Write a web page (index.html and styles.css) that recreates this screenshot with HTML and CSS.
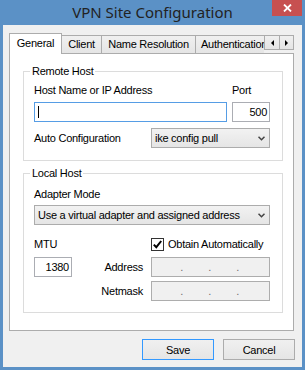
FILE: index.html
```html
<!DOCTYPE html>
<html lang="en">
<head>
<meta charset="UTF-8">
<title>VPN Site Configuration</title>
<link rel="stylesheet" href="styles.css">
</head>
<body>

<div class="window">
  <div class="titlebar">
    <span></span>
    <div class="title">VPN Site Configuration</div>
    <div class="close">
      <svg width="9" height="8" viewBox="0 0 9 8"><path d="M1 0.5 L8 7.5 M8 0.5 L1 7.5" stroke="#fff" stroke-width="1.8"/></svg>
    </div>
  </div>

  <div class="client">
    <div class="tabstrip">
      <div class="tabs">
        <div class="tab tab-active tab-general">General</div>
        <div class="tab tab-client">Client</div>
        <div class="tab tab-names">Name Resolution</div>
        <div class="tab tab-auth">Authentication</div>
      </div>
      <div class="tab-scroll">
        <div class="scroll-btn"><svg width="3" height="6" viewBox="0 0 3 6"><polygon points="3,0 3,6 0,3" fill="#000"/></svg></div>
        <div class="scroll-btn"><svg width="3" height="6" viewBox="0 0 3 6"><polygon points="0,0 0,6 3,3" fill="#000"/></svg></div>
      </div>
    </div>

    <div class="panel">
      <fieldset class="group group-remote">
        <legend>Remote Host</legend>
        <div class="host-row">
          <div class="field field-host">
            <div class="label">Host Name or IP Address</div>
            <div class="edit edit-focus"><span class="caret"></span></div>
          </div>
          <div class="field field-port">
            <div class="label">Port</div>
            <div class="edit edit-num">500</div>
          </div>
        </div>
        <div class="combo-row">
          <div class="label">Auto Configuration</div>
          <div class="combo combo-auto">
            <span>ike config pull</span>
            <svg width="7" height="5" viewBox="0 0 7 5"><path d="M0.5 0.8 L3.5 3.8 L6.5 0.8" fill="none" stroke="#444" stroke-width="1.5"/></svg>
          </div>
        </div>
      </fieldset>

      <fieldset class="group group-local">
        <legend>Local Host</legend>
        <div class="label label-adapter">Adapter Mode</div>
        <div class="combo combo-adapter">
          <span>Use a virtual adapter and assigned address</span>
          <svg width="7" height="5" viewBox="0 0 7 5"><path d="M0.5 0.8 L3.5 3.8 L6.5 0.8" fill="none" stroke="#444" stroke-width="1.5"/></svg>
        </div>
        <div class="addr-grid">
          <div class="label label-top">MTU</div>
          <div class="check">
            <span class="check-box"><svg width="11" height="11" viewBox="0 0 11 11"><path d="M1.8 5.6 L4.3 8.2 L9.2 2" fill="none" stroke="#000" stroke-width="2"/></svg></span>
            <span>Obtain Automatically</span>
          </div>
          <div class="edit edit-num">1380</div>
          <div class="label label-right">Address</div>
          <div class="ip"><span>.</span><span>.</span><span>.</span></div>
          <div class="label label-right label-mask">Netmask</div>
          <div class="ip"><span>.</span><span>.</span><span>.</span></div>
        </div>
      </fieldset>
    </div>

    <div class="buttons">
      <div class="btn btn-default">Save</div>
      <div class="btn">Cancel</div>
    </div>
  </div>
</div>

</body>
</html>
```

FILE: styles.css
```css
body {
  margin: 0;
  width: 305px;
  height: 370px;
  overflow: hidden;
  background-color: #5b91c6;
  font-family: "Liberation Sans", Arial, sans-serif;
  font-size: 11px;
  letter-spacing: -0.25px;
  color: #000;
}
.window {
  height: 370px;
  box-sizing: border-box;
  padding: 0 3px 3px;
  display: flex;
  flex-direction: column;
}

/* title bar */
.titlebar {
  height: 25px;
  margin: 0 -3px;
  display: grid;
  grid-template-columns: 1fr auto 1fr;
}
.title {
  font-family: "Noto Sans", sans-serif;
  font-size: 15px;
  letter-spacing: 0;
  line-height: 24px;
  color: #222;
}
.close {
  justify-self: end;
  width: 30px;
  height: 16px;
  margin-right: 3px;
  background-color: #c75050;
  display: flex;
  align-items: center;
  justify-content: center;
}

.client {
  flex: 1;
  background-color: #f0f0f0;
  padding: 8px 7px 7px 6px;
}

/* tabs */
.tabstrip {
  display: flex;
  height: 21px;
  margin: 0 1px -1px 0;
  position: relative;
  z-index: 1;
}
.tabs {
  display: flex;
  align-items: flex-end;
  width: 255px;
  overflow: hidden;
}
.tab {
  flex-shrink: 0;
  box-sizing: border-box;
  height: 18px;
  margin-bottom: 1px;
  border-top: 1px solid #acacac;
  border-right: 1px solid #acacac;
  background: linear-gradient(#f0f0f0, #e5e5e5);
  text-align: center;
  line-height: 17px;
  white-space: nowrap;
}
.tab-active {
  height: 21px;
  margin-bottom: 0;
  border-left: 1px solid #acacac;
  background: #fff;
  line-height: 18px;
}
.tab-general { width: 53px; }
.tab-client { width: 40px; }
.tab-names { width: 94px; }
.tab-auth {
  width: 90px;
  text-align: left;
  padding-left: 5px;
}
.tab-scroll {
  display: flex;
  width: 30px;
}
.scroll-btn {
  box-sizing: border-box;
  width: 16px;
  height: 15px;
  margin-top: 2px;
  border: 1px solid #acacac;
  background: linear-gradient(#f0f0f0, #e5e5e5);
  display: flex;
  align-items: center;
  justify-content: center;
}
.scroll-btn + .scroll-btn {
  width: 15px;
  margin-left: -1px;
}

.panel {
  box-sizing: border-box;
  height: 278px;
  margin-right: 1px;
  padding: 11px 10px 0 13px;
  background-color: #fff;
  border: 1px solid #acacac;
}

/* group boxes */
.group {
  margin: 0;
  min-width: 0;
  padding: 6px 12px 12px 10px;
  border: 1px solid #dcdcdc;
}
.group legend {
  padding: 0 2px;
  margin-left: -4px;
  line-height: 13px;
}
.group-local {
  margin-top: 6px;
  padding-top: 7.5px;
  padding-bottom: 11px;
}
.label {
  line-height: 13px;
  white-space: nowrap;
}

.host-row {
  display: flex;
  gap: 5px;
}
.field .label { margin-bottom: 5px; }
.field-host { width: 193px; }
.field-port { width: 38px; }

.edit {
  box-sizing: border-box;
  height: 20px;
  padding: 0 2px;
  border: 1px solid #abadb3;
  background-color: #fff;
  line-height: 18px;
}
.edit-num { text-align: right; }
.edit-focus { border-color: #569de5; }
.caret {
  display: inline-block;
  width: 1px;
  height: 12px;
  margin: 3px 0 0 1px;
  background-color: #000;
  vertical-align: top;
}

.combo-row {
  display: flex;
  justify-content: space-between;
  align-items: center;
  margin-top: 6px;
}
.combo {
  box-sizing: border-box;
  height: 20px;
  padding: 0 4px 0 3px;
  border: 1px solid #acacac;
  background: linear-gradient(#f2f2f2, #e5e5e5);
  display: flex;
  align-items: center;
  justify-content: space-between;
  white-space: nowrap;
}
.combo-auto { width: 119px; }
.label-adapter { margin-bottom: 4.5px; }

.addr-grid {
  display: grid;
  grid-template-columns: 38px 1fr 119px;
  grid-template-rows: 15px 20px 20px;
  column-gap: 8px;
  row-gap: 4px;
  margin-top: 13px;
}
.label-top { align-self: start; }
.label-right {
  align-self: center;
  text-align: right;
}
.label-mask { grid-column: 2; }

.check {
  grid-column: 3;
  align-self: start;
  display: flex;
  align-items: center;
  gap: 4px;
  line-height: 13px;
  white-space: nowrap;
}
.check-box {
  box-sizing: border-box;
  width: 13px;
  height: 13px;
  border: 1px solid #333;
  background-color: #fff;
  display: flex;
}

.ip {
  box-sizing: border-box;
  height: 20px;
  padding-left: 3px;
  border: 1px solid #adadad;
  background-color: #f0f0f0;
  color: #6d6d6d;
  line-height: 18px;
  display: flex;
}
.ip span {
  width: 28px;
  text-align: right;
}

/* dialog buttons */
.buttons {
  display: flex;
  justify-content: flex-end;
  gap: 9px;
  margin-top: 8px;
}
.btn {
  box-sizing: border-box;
  width: 72px;
  height: 21px;
  border: 1px solid #acacac;
  background: linear-gradient(#f0f0f0, #e5e5e5);
  display: flex;
  align-items: center;
  justify-content: center;
}
.btn-default { border-color: #3399ff; }
```
